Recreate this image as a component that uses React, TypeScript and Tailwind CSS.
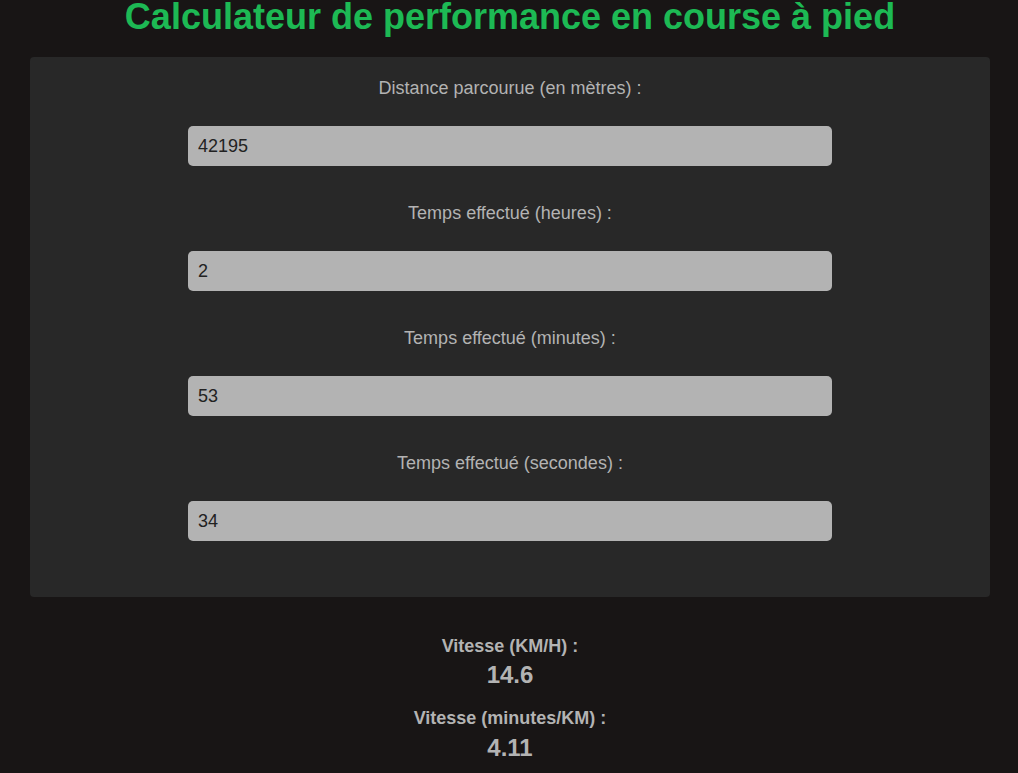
import { useState } from "react";

type Field = { label: string; value: string };

const initialFields: Field[] = [
  { label: "Distance parcourue (en mètres) :", value: "42195" },
  { label: "Temps effectué (heures) :", value: "2" },
  { label: "Temps effectué (minutes) :", value: "53" },
  { label: "Temps effectué (secondes) :", value: "34" },
];

export default function App() {
  const [fields, setFields] = useState<Field[]>(initialFields);

  const update = (i: number, value: string) => {
    setFields(fields.map((f, idx) => (idx === i ? { ...f, value } : f)));
  };

  return (
    <div
      className="min-h-[773px] bg-[#181515] pl-[30px] pr-[28px]"
      style={{ fontFamily: '"Liberation Sans", Arial, sans-serif' }}
    >
      {/* Title */}
      <h1 className="text-center text-[36px] leading-[31px] pt-[1px] font-bold text-[#1db954] mb-[25px]">
        Calculateur de performance en course à pied
      </h1>

      {/* Form panel */}
      <div className="bg-[#282828] rounded-[4px] pt-[21px] pb-[19px] flex flex-col items-center">
        {fields.map((f, i) => (
          <div key={i} className="flex flex-col items-center w-full mb-[37px]">
            <label className="block text-[18px] leading-[20px] text-[#b3b3b3] mb-[28px]">
              {f.label}
            </label>
            <input
              type="text"
              value={f.value}
              onChange={(e) => update(i, e.target.value)}
              className="w-[644px] h-[40px] rounded-[5px] bg-[#b3b3b3] px-[10px] text-[18px] text-[#222] outline-none"
            />
          </div>
        ))}
      </div>

      {/* Results */}
      <div className="flex flex-col items-center pt-[38px] text-[#b3b3b3] font-bold">
        <p className="text-[18px] leading-[22px]">Vitesse (KM/H) :</p>
        <p className="text-[24px] leading-[28px] mt-[4px]">14.6</p>
        <p className="text-[18px] leading-[22px] mt-[18px]">Vitesse (minutes/KM) :</p>
        <p className="text-[24px] leading-[28px] mt-[5px]">4.11</p>
      </div>
    </div>
  );
}
